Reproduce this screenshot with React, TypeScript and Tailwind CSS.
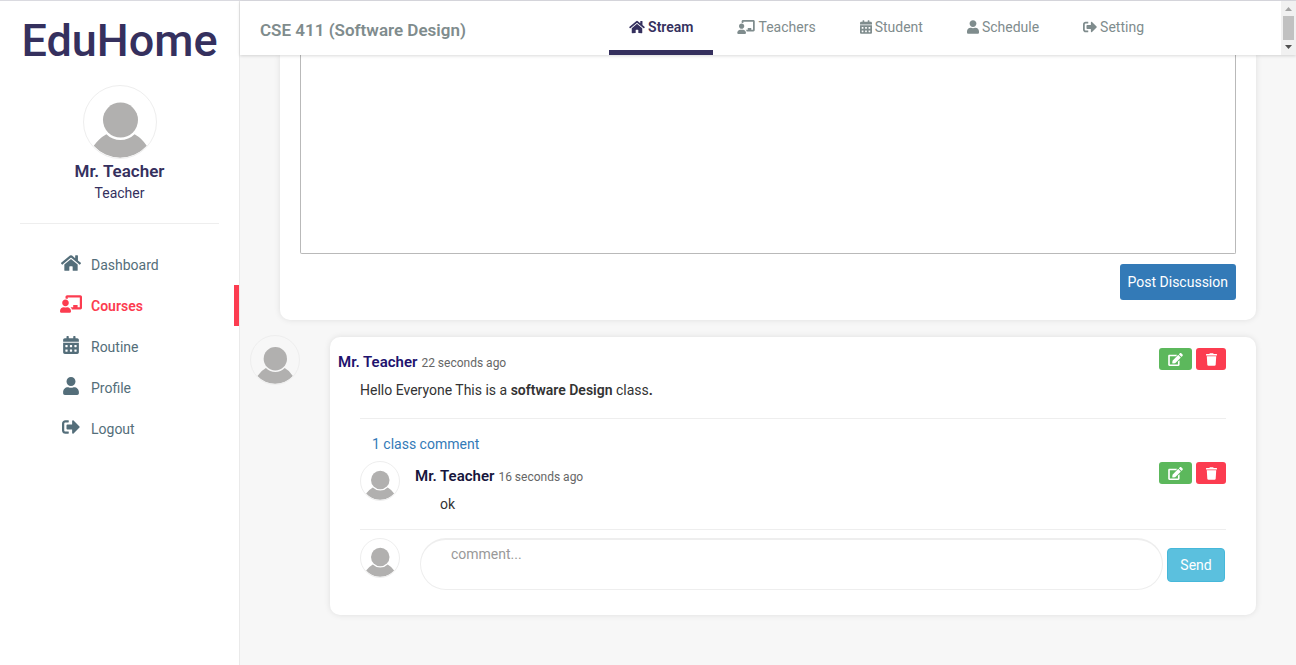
import React from "react";
import type { IconType } from "react-icons";
import {
  FaCalendarAlt,
  FaChalkboardTeacher,
  FaEdit,
  FaHome,
  FaSignOutAlt,
  FaTrash,
  FaUser,
} from "react-icons/fa";

type LinkItem = { label: string; icon: IconType; size: string; active?: boolean };

const sideLinks: LinkItem[] = [
  { label: "Dashboard", icon: FaHome, size: "w-[20px]" },
  { label: "Courses", icon: FaChalkboardTeacher, size: "w-[22px]", active: true },
  { label: "Routine", icon: FaCalendarAlt, size: "w-[16px]" },
  { label: "Profile", icon: FaUser, size: "w-[16px]" },
  { label: "Logout", icon: FaSignOutAlt, size: "w-[18px]" },
];

const tabs: LinkItem[] = [
  { label: "Stream", icon: FaHome, size: "w-[16px]", active: true },
  { label: "Teachers", icon: FaChalkboardTeacher, size: "w-[18px]" },
  { label: "Student", icon: FaCalendarAlt, size: "w-[12px]" },
  { label: "Schedule", icon: FaUser, size: "w-[12px]" },
  { label: "Setting", icon: FaSignOutAlt, size: "w-[14px]" },
];

function Avatar({ className }: { className: string }) {
  return (
    <svg viewBox="0 0 74 74" className={`shrink-0 rounded-full border border-[#eeeeee] ${className}`} role="img" aria-label="Avatar">
      <circle cx="37.5" cy="35" r="18" fill="#b1b0af" />
      <path d="M10 61.5Q15 54 23 49.5A20.5 20.5 0 0 0 52 49.5Q60 54 64.500 61.500A36.500 36.500 0 0 1 10 61.500Z" fill="#b1b0af" />
    </svg>
  );
}

function Actions() {
  return (
    <div className="flex gap-1 text-white">
      <button type="button" aria-label="Edit" className="flex h-[22px] w-[33px] items-center justify-center rounded-[3px] bg-[#5cb85c]">
        <FaEdit className="h-[13px] w-[15px]" />
      </button>
      <button type="button" aria-label="Delete" className="flex h-[22px] w-[30px] items-center justify-center rounded-[3px] bg-[#fc3c50]">
        <FaTrash className="h-[13px] w-[11px]" />
      </button>
    </div>
  );
}

function Sidebar() {
  return (
    <aside className="w-60 shrink-0 border-r border-[#eaeaea] bg-white">
      <h1 className="pt-2 text-center text-[45px] leading-[64px] font-medium text-[#35305e]">EduHome</h1>
      <div className="mx-5 mt-3 flex flex-col items-center border-b border-[#eeeeee] pb-5 text-[#35305e]">
        <Avatar className="size-[74px]" />
        <strong className="text-[17px] leading-6 font-semibold">Mr. Teacher</strong>
        <span className="text-[14px] leading-5">Teacher</span>
      </div>
      <nav className="mt-5 text-[14px]">
        {sideLinks.map(({ label, icon: Icon, size, active }) => (
          <a
            key={label}
            href="#"
            className={`flex h-[41px] items-center gap-2 border-r-[5px] pt-0.5 pl-[59px] ${
              active ? "border-[#fc3c50] font-semibold text-[#fc3c50]" : "border-transparent text-[#546e7a]"
            }`}
          >
            <span className="mb-1.5 flex w-6 justify-center">
              <Icon className={`h-[18px] ${size}`} />
            </span>
            {label}
          </a>
        ))}
      </nav>
    </aside>
  );
}

function Header() {
  return (
    <header className="relative flex h-[54px] bg-white shadow-[0_1px_3px_rgba(0,0,0,0.15)]">
      <h2 className="pt-[15px] pl-5 text-[17px] leading-7 font-semibold text-[#7f8c8d]">CSE 411 (Software Design)</h2>
      <nav className="mr-[117px] ml-auto flex gap-1 text-[14px]">
        {tabs.map(({ label, icon: Icon, size, active }) => (
          <a
            key={label}
            href="#"
            className={`flex items-center gap-[3px] border-b-[5px] px-5 pt-[3px] ${
              active ? "border-[#35305e] font-semibold text-[#35305e]" : "border-transparent text-[#7f8c8d]"
            }`}
          >
            <Icon className={`h-[14px] ${size}`} />
            {label}
          </a>
        ))}
      </nav>
      <div className="flex w-[15px] flex-col items-center justify-between bg-[#f1f1f1] py-[6px]" aria-hidden="true">
        <svg viewBox="0 0 7 4" className="h-1 w-[7px]"><path d="M0 4L3.500 0L7 4Z" fill="#a3a3a3" /></svg>
        <div className="h-6 w-[11px] bg-[#c1c1c1]" />
        <svg viewBox="0 0 7 4" className="h-1 w-[7px]"><path d="M0 0H7L3.500 4Z" fill="#505050" /></svg>
      </div>
    </header>
  );
}

export default function App() {
  return (
    <div className="flex min-h-screen border-t border-[#dadae0] bg-[#f7f7f7] font-['Roboto',sans-serif] text-[14px] text-[#333333]">
      <Sidebar />
      <div className="min-w-0 flex-1">
        <Header />
        <main className="pr-10 pb-10">
          <section className="ml-10 rounded-b-[10px] bg-white px-5 pb-5 shadow-[0_0_6px_rgba(0,0,0,0.1)]">
            <textarea aria-label="Discussion" className="block h-[199px] w-full resize-none rounded-b-[2px] border border-t-0 border-[#b9b9b9] outline-none" />
            <div className="mt-[10px] flex justify-end">
              <button type="button" className="h-9 rounded-[3px] bg-[#337ab7] px-2 text-white">Post Discussion</button>
            </div>
          </section>

          <div className="mt-[15px] flex items-start pl-[10px]">
            <Avatar className="size-[50px]" />
            <article className="mt-0.5 ml-[30px] min-w-0 flex-1 rounded-[10px] bg-white pt-[11px] pr-[30px] pb-[25px] pl-2 shadow-[0_0_6px_rgba(0,0,0,0.1)]">
              <div className="flex h-[27px] justify-between">
                <p className="pt-[3px] leading-[22px]">
                  <strong className="text-[15px] font-semibold text-[#21126e]">Mr. Teacher</strong>
                  <time className="ml-1 text-[12px] text-[#666666]">22 seconds ago</time>
                </p>
                <Actions />
              </div>
              <div className="pl-[22px]">
                <p className="mt-[5px] border-b border-[#eeeeee] pb-[18px] leading-5">
                  Hello Everyone This is a <b className="font-semibold">software Design</b> class<b>.</b>
                </p>
                <a href="#" className="mt-[15px] ml-3 block leading-5 text-[#337ab7]">1 class comment</a>
                <div className="mt-[7px] flex items-start border-b border-[#eeeeee] pb-[15px]">
                  <Avatar className="size-10" />
                  <div className="mt-px ml-[15px] flex-1">
                    <p className="h-[27px] pt-[3px] leading-[22px]">
                      <strong className="text-[15px] font-semibold text-[#17153c]">Mr. Teacher</strong>
                      <time className="ml-1 text-[12px] text-[#666666]">16 seconds ago</time>
                    </p>
                    <p className="mt-[5px] pl-[25px] leading-5">ok</p>
                  </div>
                  <div className="mt-px">
                    <Actions />
                  </div>
                </div>
                <form className="mt-2 flex items-start" onSubmit={(e) => e.preventDefault()}>
                  <Avatar className="size-10" />
                  <textarea
                    aria-label="Comment"
                    placeholder="comment..."
                    className="ml-5 h-[52px] min-w-0 flex-1 resize-none rounded-[26px] border border-t-2 border-[#eeeeee] px-[30px] pt-1 leading-5 outline-none placeholder:text-[#999999]"
                  />
                  <button type="submit" className="mt-[10px] mr-px ml-1 h-[34px] w-[58px] rounded-[4px] border border-[#46b8da] bg-[#5bc0de] text-white">Send</button>
                </form>
              </div>
            </article>
          </div>
        </main>
      </div>
    </div>
  );
}
